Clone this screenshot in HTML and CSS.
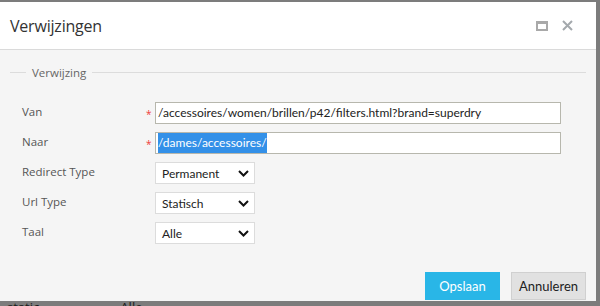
FILE: index.html
```html
<!DOCTYPE html>
<html lang="nl">

<head>
    <meta charset="UTF-8">
    <title>Verwijzingen</title>
    <link rel="stylesheet" href="styles.css">
</head>

<body>
    <div class="dialog">
        <div class="dialog-head">
            <h1>Verwijzingen</h1>
            <span class="icon-max"></span>
            <svg class="icon-close" width="11" height="11" viewBox="0 0 11 11">
                <path d="M1 1L10 10M10 1L1 10" stroke="#a4a9ad" stroke-width="2" />
            </svg>
        </div>

        <div class="dialog-body">
            <div class="legend">
                <span class="legend-line short"></span>
                <span class="legend-text">Verwijzing</span>
                <span class="legend-line"></span>
            </div>

            <div class="row">
                <label>Van</label>
                <span class="req">*</span>
                <div class="input wide">/accessoires/women/brillen/p42/filters.html?brand=superdry</div>
            </div>
            <div class="row">
                <label>Naar</label>
                <span class="req">*</span>
                <div class="input wide"><span class="selected">/dames/accessoires/</span></div>
            </div>
            <div class="row">
                <label>Redirect Type</label>
                <span class="req"></span>
                <div class="select">Permanent<svg width="11" height="7" viewBox="0 0 11 7"><path d="M1 1L5.5 5.5L10 1" fill="none" stroke="#111" stroke-width="2" /></svg></div>
            </div>
            <div class="row">
                <label>Url Type</label>
                <span class="req"></span>
                <div class="select">Statisch<svg width="11" height="7" viewBox="0 0 11 7"><path d="M1 1L5.5 5.5L10 1" fill="none" stroke="#111" stroke-width="2" /></svg></div>
            </div>
            <div class="row">
                <label>Taal</label>
                <span class="req"></span>
                <div class="select">Alle<svg width="11" height="7" viewBox="0 0 11 7"><path d="M1 1L5.5 5.5L10 1" fill="none" stroke="#111" stroke-width="2" /></svg></div>
            </div>

            <div class="actions">
                <button class="btn primary">Opslaan</button>
                <button class="btn">Annuleren</button>
            </div>
        </div>
    </div>

    <!-- page behind the overlay -->
    <div class="behind">
        <span class="cell">static</span>
        <span class="cell">Alle</span>
    </div>
</body>

</html>
```

FILE: styles.css
```css
body {
    margin: 0;
    background-color: #7c7c7c;
    font-family: "Open Sans", "Noto Sans", sans-serif;
    overflow: hidden;
}

.dialog {
    margin-top: 2px;
    width: 596px;
    height: 299px;
    background: #f5f5f5;
    display: flex;
    flex-direction: column;
}

.dialog-head {
    height: 47px;
    background: #fff;
    border-bottom: 1px solid #dadada;
    display: flex;
    align-items: center;
    padding: 0 23px 0 10px;
}

.dialog-head h1 {
    flex: 1;
    margin: 0;
    font-size: 16px;
    font-weight: normal;
    color: #333;
    letter-spacing: -0.2px;
}

.icon-max {
    width: 8px;
    height: 5px;
    border: 2px solid #a9a9a9;
    border-top-width: 3px;
    margin-right: 14px;
}

.dialog-body {
    flex: 1;
    display: flex;
    flex-direction: column;
    padding: 0 10px;
}

.legend {
    display: flex;
    align-items: center;
    height: 22px;
    margin-top: 11px;
    margin-bottom: 19px;
}

.legend-line {
    flex: 1;
    height: 1px;
    background: #dcdcdc;
}

.legend-line.short {
    flex: 0 0 16px;
}

.legend-text {
    font-size: 11.5px;
    color: #666;
    padding: 0 6px;
}

.row {
    display: flex;
    align-items: center;
    height: 22px;
    margin-bottom: 8px;
}

.row label {
    width: 123px;
    padding-left: 12px;
    font-size: 11.5px;
    color: #555;
    margin-top: -3px;
}

.req {
    width: 10px;
    height: 22px;
    box-sizing: border-box;
    padding-top: 5px;
    color: #ee3b3b;
    font-size: 10px;
    line-height: 14px;
    text-indent: 1px;
}

.input {
    box-sizing: border-box;
    height: 22px;
    border: 1px solid #b7b7ad;
    background: #fff;
    font-family: Lato, "Open Sans", sans-serif;
    font-size: 12px;
    color: #222;
    padding: 0 2px;
    line-height: 20px;
    white-space: nowrap;
    overflow: hidden;
}

.input.wide {
    width: 406px;
}

.selected {
    background: #3390e8;
    color: #fff;
    padding: 3px 0;
}

.select {
    box-sizing: border-box;
    width: 100px;
    height: 22px;
    border: 1px solid #dcdcdc;
    background: #fff;
    font-family: Lato, "Open Sans", sans-serif;
    font-size: 12px;
    color: #222;
    padding: 0 5px 0 6px;
    display: flex;
    align-items: center;
    justify-content: space-between;
}

.actions {
    margin-top: auto;
    display: flex;
    justify-content: flex-end;
    gap: 11px;
    margin-bottom: 1px;
}

.btn {
    width: 75px;
    height: 28px;
    border: 1px solid #d0d0d0;
    background: #e1e1e1;
    color: #222;
    font-family: Lato, "Open Sans", sans-serif;
    font-size: 13px;
    padding: 0;
}

.btn.primary {
    background: #29b6e7;
    border-color: #29b6e7;
    color: #fff;
}

.behind {
    margin-top: -2px;
    padding-left: 7px;
    font-size: 13px;
    line-height: 16px;
    color: #1a1a1a;
}

.behind .cell {
    display: inline-block;
    width: 110px;
}
```
